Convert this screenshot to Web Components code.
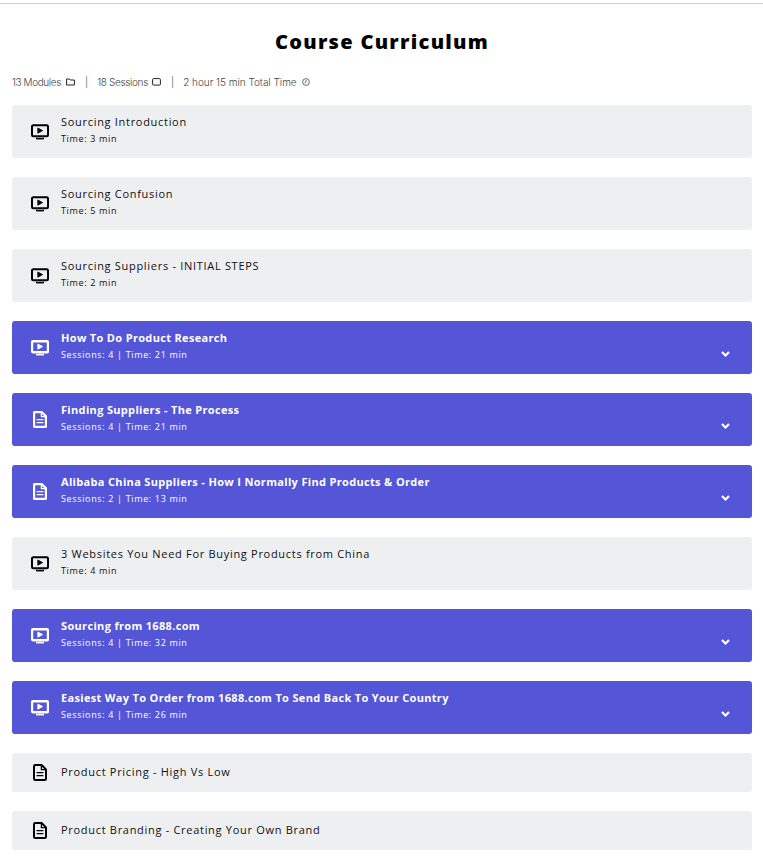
<!DOCTYPE html>
<html lang="en">
<head>
<meta charset="utf-8">
<title>Course Curriculum</title>
<style>
    html, body { margin: 0; padding: 0; background: #fff; }
    body { font-family: "Open Sans", sans-serif; height: 860px; overflow: hidden; }
</style>
</head>
<body>
<template id="icon-video">
    <svg viewBox="0 0 18 16" width="18" height="16" fill="none" stroke="currentColor">
        <rect class="outline" x="1" y="1.2" width="16" height="11" rx="1.2" stroke-width="2"/>
        <path d="M6.8 4v5.2L11.6 6.6z" fill="currentColor" stroke-width="0.8" stroke-linejoin="round"/>
        <path d="M5 14.6h8" stroke-width="1.6"/>
    </svg>
</template>
<template id="icon-doc">
    <svg viewBox="0 0 14 17" width="14" height="17" fill="none" stroke="currentColor">
        <path class="outline" d="M1 2.2Q1 1 2.2 1H8.6L13 5.4V14.800Q13 16 11.800 16H2.200Q1 16 1 14.800Z" stroke-width="2" stroke-linejoin="round"/>
        <path d="M8.400 1V5.600H13" stroke-width="1.300"/>
        <path d="M3.600 8.600H10.400M3.600 11.600H10.400" stroke-width="1.400"/>
    </svg>
</template>

<curriculum-page>
    <course-item icon="video" title="Sourcing Introduction" meta="Time: 3 min"></course-item>
    <course-item icon="video" title="Sourcing Confusion" meta="Time: 5 min"></course-item>
    <course-item icon="video" title="Sourcing Suppliers - INITIAL STEPS" meta="Time: 2 min"></course-item>
    <course-item module icon="video" title="How To Do Product Research" meta="Sessions: 4 | Time: 21 min"></course-item>
    <course-item module icon="doc" title="Finding Suppliers - The Process" meta="Sessions: 4 | Time: 21 min"></course-item>
    <course-item module icon="doc" title="Alibaba China Suppliers - How I Normally Find Products &amp; Order" meta="Sessions: 2 | Time: 13 min"></course-item>
    <course-item icon="video" title="3 Websites You Need For Buying Products from China" meta="Time: 4 min"></course-item>
    <course-item module icon="video" title="Sourcing from 1688.com" meta="Sessions: 4 | Time: 32 min"></course-item>
    <course-item module icon="video" title="Easiest Way To Order from 1688.com To Send Back To Your Country" meta="Sessions: 4 | Time: 26 min"></course-item>
    <course-item icon="doc" title="Product Pricing - High Vs Low"></course-item>
    <course-item icon="doc" title="Product Branding - Creating Your Own Brand"></course-item>
</curriculum-page>

<script>
// Page shell: heading, summary line, and the list through a slot
class CurriculumPage extends HTMLElement {
    constructor() {
        super();
        this.attachShadow({ mode: 'open' });
    }

    connectedCallback() {
        this.shadowRoot.innerHTML = `
            <style>
                :host {
                    display: block;
                    border-top: 1px solid #cfcfcf;
                    margin-top: 3px;
                    padding: 0 11px 0 12px;
                }
                h2 {
                    margin: 0;
                    padding-top: 24px;
                    font: 800 20px/28px "Open Sans", sans-serif;
                    letter-spacing: 1.3px;
                    text-align: center;
                    color: #000;
                }
                .summary {
                    display: flex;
                    align-items: center;
                    height: 16px;
                    margin: 18px 0 15px;
                    font: 300 10px/16px Inter, sans-serif;
                    letter-spacing: -0.4px;
                    color: #444;
                    white-space: nowrap;
                }
                .summary svg { margin-left: 5px; flex: none; }
                .summary .sessions { letter-spacing: -0.35px; }
                .summary .total { letter-spacing: -0.02px; }
                .sep { margin: 0 9.5px 0 10px; color: #555; }
                .list { display: flex; flex-direction: column; gap: 19px; }
            </style>
            <h2>Course Curriculum</h2>
            <div class="summary">
                <span>13 Modules</span>
                <svg viewBox="0 0 9 8" width="9" height="8" fill="none" stroke="#222"><path d="M.6 1h3l.8 1h4v5H.6z"/></svg>
                <span class="sep">|</span>
                <span class="sessions">18 Sessions</span>
                <svg viewBox="0 0 9 8" width="9" height="8" fill="none" stroke="#222" style="margin-left:4px"><rect x=".6" y=".6" width="7.800" height="6.500" rx="1"/></svg>
                <span class="sep">|</span>
                <span class="total">2 hour 15 min Total Time</span>
                <svg viewBox="0 0 9 9" width="8" height="8" fill="none" stroke="#333" stroke-width=".8"><circle cx="4.500" cy="4.500" r="3.800"/><path d="M4.500 2.200v2.400l-1.500 1"/></svg>
            </div>
            <div class="list"><slot></slot></div>
        `;
    }
}

// One row of the curriculum: lesson (grey) or module (purple, with chevron)
class CourseItem extends HTMLElement {
    constructor() {
        super();
        this.attachShadow({ mode: 'open' });
    }

    connectedCallback() {
        const title = this.getAttribute('title') || '';
        const meta = this.getAttribute('meta') || '';
        const isModule = this.hasAttribute('module');
        const icon = document.getElementById('icon-' + this.getAttribute('icon'));

        this.shadowRoot.innerHTML = `
            <style>
                :host {
                    display: flex;
                    align-items: center;
                    box-sizing: border-box;
                    min-height: ${meta ? 53 : 39}px;
                    padding: 0 22px 0 19px;
                    border-radius: 3px;
                    background: #eeeff1;
                    color: #111;
                }
                :host([module]) {
                    background: #5555d8;
                    color: #fff;
                }
                :host([module]) .outline { stroke-width: 2.4; }
                .icon {
                    display: flex;
                    justify-content: center;
                    width: 18px;
                    margin-right: 12px;
                    flex: none;
                    color: #000;
                }
                :host([module]) .icon { color: #fff; }
                .text { flex: 1; min-width: 0; padding-bottom: ${meta ? 5 : 2}px; }
                .title {
                    font: 500 11px/15px "Open Sans", sans-serif;
                    letter-spacing: 0.7px;
                }
                :host([module]) .title { font-weight: 700; letter-spacing: 0.33px; }
                .meta {
                    margin-top: 4px;
                    font: 400 9px/12px "Open Sans", sans-serif;
                    letter-spacing: 0.65px;
                }
                .chevron { display: flex; margin-top: 12px; }
            </style>
            <span class="icon"></span>
            <div class="text">
                <div class="title">${title.replace(/&/g, '&amp;')}</div>
                ${meta ? `<div class="meta">${meta}</div>` : ''}
            </div>
            ${isModule ? `<span class="chevron"><svg viewBox="0 0 9 6" width="9" height="6" fill="none" stroke="#fff" stroke-width="2.200"><path d="M1 1l3.500 3.500L8 1"/></svg></span>` : ''}
        `;
        this.shadowRoot.querySelector('.icon').appendChild(icon.content.cloneNode(true));
    }
}

customElements.define('curriculum-page', CurriculumPage);
customElements.define('course-item', CourseItem);
</script>
</body>
</html>
